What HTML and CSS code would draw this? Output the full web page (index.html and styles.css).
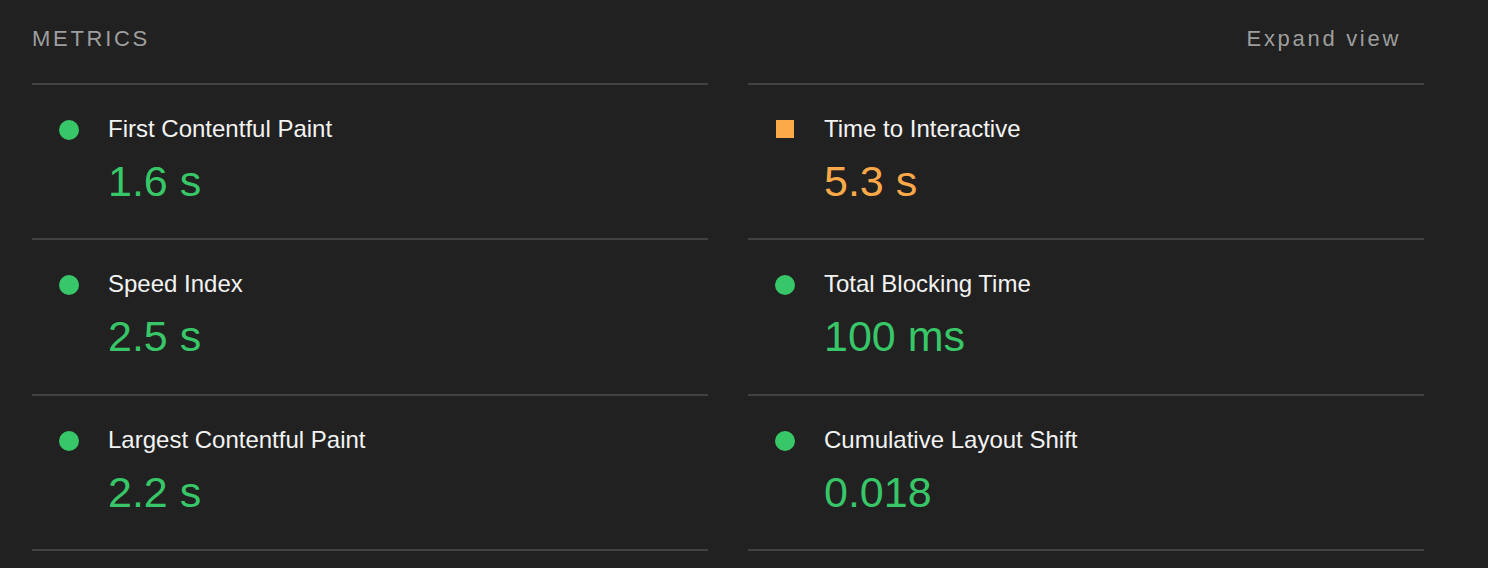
FILE: index.html
```html
<!DOCTYPE html>
<html lang="en">
<head>
<meta charset="utf-8">
<title>Metrics</title>
<link rel="stylesheet" href="styles.css">
</head>
<body>
<section class="metrics">
  <div class="metrics-header">
    <span class="metrics-title">Metrics</span>
    <span class="metrics-toggle">Expand view</span>
  </div>
  <div class="metrics-grid">
    <div class="metric pass">
      <span class="metric-icon"></span>
      <div class="metric-body">
        <div class="metric-name">First Contentful Paint</div>
        <div class="metric-value">1.6 s</div>
      </div>
    </div>
    <div class="metric pass">
      <span class="metric-icon"></span>
      <div class="metric-body">
        <div class="metric-name">Speed Index</div>
        <div class="metric-value">2.5 s</div>
      </div>
    </div>
    <div class="metric pass">
      <span class="metric-icon"></span>
      <div class="metric-body">
        <div class="metric-name">Largest Contentful Paint</div>
        <div class="metric-value">2.2 s</div>
      </div>
    </div>
    <div class="metric average">
      <span class="metric-icon"></span>
      <div class="metric-body">
        <div class="metric-name">Time to Interactive</div>
        <div class="metric-value">5.3 s</div>
      </div>
    </div>
    <div class="metric pass">
      <span class="metric-icon"></span>
      <div class="metric-body">
        <div class="metric-name">Total Blocking Time</div>
        <div class="metric-value">100 ms</div>
      </div>
    </div>
    <div class="metric pass">
      <span class="metric-icon"></span>
      <div class="metric-body">
        <div class="metric-name">Cumulative Layout Shift</div>
        <div class="metric-value">0.018</div>
      </div>
    </div>
  </div>
</section>
</body>
</html>
```
FILE: styles.css
```css
html, body {
  margin: 0;
  padding: 0;
  background: #212121;
}

body {
  font-family: "Liberation Sans", Arial, sans-serif;
  color: #f5f5f5;
  height: 568px;
  overflow: hidden;
}

.metrics {
  padding: 26px 0 0 32px;
  width: 1392px;
}

.metrics-header {
  display: flex;
  justify-content: space-between;
  align-items: center;
  height: 25px;
  padding-right: 23px;
  margin-bottom: 32px;
  font-size: 22px;
  line-height: 25px;
  letter-spacing: 2.7px;
  color: #9e9e9e;
}

.metrics-title {
  text-transform: uppercase;
}

.metrics-grid {
  display: grid;
  grid-template-columns: 676px 676px;
  grid-template-rows: repeat(3, auto);
  grid-auto-flow: column;
  column-gap: 40px;
}

.metric {
  display: flex;
  align-items: flex-start;
  border-bottom: 2px solid #424242;
  padding: 30px 0 31.33px 0;
}

.metric:nth-child(1),
.metric:nth-child(4) {
  border-top: 2px solid #424242;
}

.metric-icon {
  flex: none;
  width: 20px;
  height: 20px;
  margin: 5px 29px 0 27px;
  box-sizing: border-box;
}

.pass .metric-icon {
  background: #38c768;
  border-radius: 50%;
}

.average .metric-icon {
  width: 18px;
  height: 18px;
  margin: 5px 30px 0 28px;
  background: #fba949;
}

.metric-name {
  font-size: 24px;
  line-height: 28px;
  color: #f3f3f3;
}

.metric-value {
  margin-top: 12px;
  font-size: 43px;
  line-height: 52px;
}

.pass .metric-value {
  color: #38c768;
}

.average .metric-value {
  color: #fba949;
}
```
